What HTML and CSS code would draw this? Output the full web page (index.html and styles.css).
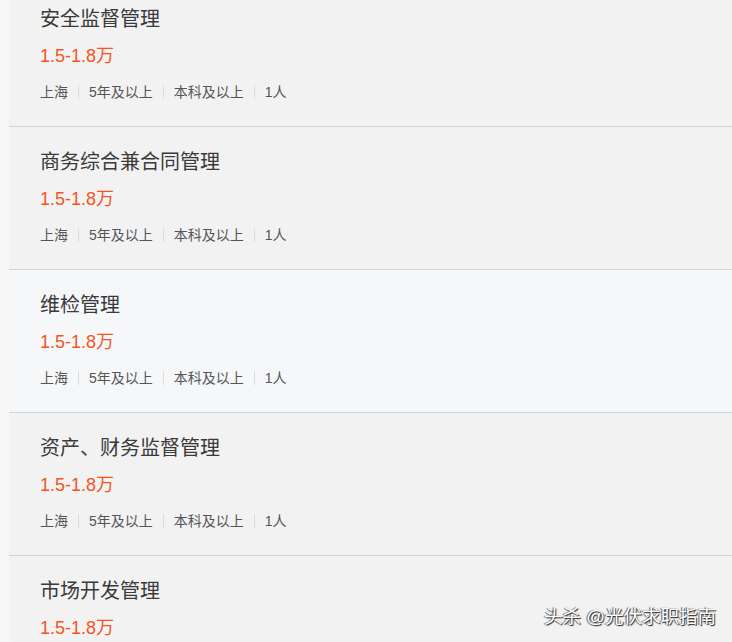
FILE: index.html
```html
<!DOCTYPE html>
<html lang="zh">
<head>
<meta charset="utf-8">
<title>职位列表</title>
<link rel="stylesheet" href="styles.css">
</head>
<body>
<div class="page">
  <ul class="jobs">
    <li class="job">
      <div class="job-title">安全监督管理</div>
      <div class="job-salary">1.5-1.8万</div>
      <div class="job-tags"><span>上海</span><span>5年及以上</span><span>本科及以上</span><span>1人</span></div>
    </li>
    <li class="job">
      <div class="job-title">商务综合兼合同管理</div>
      <div class="job-salary">1.5-1.8万</div>
      <div class="job-tags"><span>上海</span><span>5年及以上</span><span>本科及以上</span><span>1人</span></div>
    </li>
    <li class="job job-active">
      <div class="job-title">维检管理</div>
      <div class="job-salary">1.5-1.8万</div>
      <div class="job-tags"><span>上海</span><span>5年及以上</span><span>本科及以上</span><span>1人</span></div>
    </li>
    <li class="job">
      <div class="job-title">资产、财务监督管理</div>
      <div class="job-salary">1.5-1.8万</div>
      <div class="job-tags"><span>上海</span><span>5年及以上</span><span>本科及以上</span><span>1人</span></div>
    </li>
    <li class="job">
      <div class="job-title">市场开发管理</div>
      <div class="job-salary">1.5-1.8万</div>
    </li>
  </ul>
  <div class="watermark">头杀 @光伏求职指南</div>
</div>
</body>
</html>
```
FILE: styles.css
```css
html, body {
  margin: 0;
  padding: 0;
  background: #f7f7f7;
  overflow: hidden;
}
body {
  font-family: "Liberation Sans", "Noto Sans CJK SC", sans-serif;
}
.page {
  position: relative;
  width: 732px;
  height: 642px;
  overflow: hidden;
  padding-left: 9px;
  box-sizing: border-box;
}
.jobs {
  list-style: none;
  margin: -16px 0 0 0;
  padding: 0;
}
.job {
  background: #f2f2f2;
  padding: 21px 0 24px 31px;
  border-bottom: 1px solid #cfd4da;
}
.job-active {
  background: #f6f7f9;
}
.job-title {
  font-size: 20px;
  line-height: 28px;
  color: #3a3a3a;
}
.job-salary {
  margin-top: 10px;
  font-size: 18px;
  line-height: 26px;
  color: #f5541e;
}
.job-tags {
  margin-top: 13px;
  height: 20px;
  display: flex;
  align-items: center;
  font-size: 14px;
  color: #555;
}
.job-tags span {
  padding: 0 10px;
  border-left: 1px solid #dcdcdc;
  line-height: 14px;
}
.job-tags span:first-child {
  padding-left: 0;
  border-left: none;
}
.watermark {
  position: absolute;
  right: 16px;
  bottom: 13px;
  font-size: 18.5px;
  line-height: 24px;
  color: #fff;
  text-shadow: 1px 1px 1px #222, -1px 0 1px #555;
}
```
